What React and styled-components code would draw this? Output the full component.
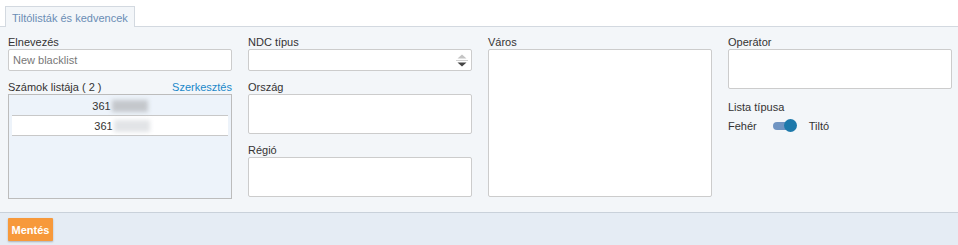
import React from "react";
import styled, { createGlobalStyle } from "styled-components";

const GlobalStyle = createGlobalStyle`
  html, body {
    margin: 0;
    padding: 0;
    background: #ffffff;
    font-family: "Liberation Sans", Arial, sans-serif;
    font-size: 11px;
    color: #333333;
  }
`;

const Page = styled.div`
  width: 958px;
  height: 245px;
  display: flex;
  flex-direction: column;
  padding-top: 6px;
  box-sizing: border-box;
  overflow: hidden;
`;

const TabBar = styled.div`
  display: flex;
  padding-left: 5px;
  border-bottom: 1px solid #d3d9e0;
  height: 20px;
`;

const Tab = styled.div`
  height: 21px;
  box-sizing: border-box;
  padding: 4px 6px 0 6px;
  border: 1px solid #d3d9e0;
  border-bottom: none;
  background: #f3f6f9;
  color: #6a8db5;
  font-size: 11px;
  line-height: 14px;
  margin-bottom: -1px;
`;

const Panel = styled.div`
  flex: 1;
  background: #f3f6f9;
  display: grid;
  grid-template-columns: repeat(4, 224px);
  column-gap: 16px;
  padding: 8px 0 0 8px;
  border-bottom: 1px solid #c9d1da;
`;

const Column = styled.div`
  display: flex;
  flex-direction: column;
`;

const Label = styled.div`
  line-height: 14px;
  font-size: 11px;
  color: #333;
  margin-top: ${(p) => p.$top || 0}px;
  display: flex;
  justify-content: space-between;
`;

const Link = styled.span`
  color: #1a88c9;
`;

const Input = styled.div`
  height: ${(p) => p.$h || 22}px;
  box-sizing: border-box;
  background: #fff;
  border: 1px solid #cccccc;
  border-radius: 2px;
  color: #777;
  padding: 4px 4px;
  line-height: 12px;
  position: relative;
`;

const Spinner = styled.svg`
  position: absolute;
  right: 3px;
  top: 4px;
`;

const ListBox = styled.div`
  height: 105px;
  box-sizing: border-box;
  background: #edf3fa;
  border: 1px solid #bcbcbc;
  padding: 1px 3px;
`;

const ListRow = styled.div`
  height: 20px;
  box-sizing: border-box;
  border-bottom: 1px solid #c8c8c8;
  background: ${(p) => (p.$white ? "#ffffff" : "transparent")};
  display: flex;
  justify-content: center;
  align-items: center;
  color: #333;
  padding-left: ${(p) => p.$shift || 0}px;
`;

const Blur = styled.span`
  display: inline-block;
  width: 36px;
  height: 12px;
  background: ${(p) => p.$c};
  filter: blur(2px);
  margin-left: 1px;
`;

const ToggleRow = styled.div`
  display: flex;
  align-items: center;
  height: 14px;
  margin-top: 5px;
`;

const Track = styled.div`
  width: 23px;
  height: 8px;
  border-radius: 4px;
  background: #6f94c2;
  position: relative;
  margin: 0 13px 0 16px;
`;

const Knob = styled.div`
  position: absolute;
  width: 13px;
  height: 13px;
  border-radius: 50%;
  background: #1d79ab;
  right: -1px;
  top: -3px;
`;

const Footer = styled.div`
  height: 32px;
  background: #e5ecf4;
  padding: 5px 8px;
  box-sizing: border-box;
`;

const Button = styled.button`
  height: 23px;
  width: 45px;
  border: none;
  border-radius: 1px;
  background: #f7993b;
  color: #fff;
  font-family: "Liberation Sans", Arial, sans-serif;
  font-weight: bold;
  font-size: 11px;
  padding: 0;
  box-shadow: 0 1px 2px rgba(0, 0, 0, 0.25);
`;

export default function App() {
  return (
    <Page>
      <GlobalStyle />
      <TabBar>
        <Tab>Tiltólisták és kedvencek</Tab>
      </TabBar>
      <Panel>
        <Column>
          <Label>Elnevezés</Label>
          <Input>New blacklist</Input>
          <Label $top={9}>
            <span>Számok listája ( 2 )</span>
            <Link>Szerkesztés</Link>
          </Label>
          <ListBox>
            <ListRow>
              361<Blur $c="#c4c7cc" />
            </ListRow>
            <ListRow $white $shift={4}>
              361<Blur $c="#e2e4e7" />
            </ListRow>
          </ListBox>
        </Column>
        <Column>
          <Label>NDC típus</Label>
          <Input>
            <Spinner width="12" height="13" viewBox="0 0 12 13">
              <path d="M1.5 4.5 L6 0.5 L10.5 4.5 Z" fill="#c4c4c4" />
              <line x1="0" y1="6.5" x2="12" y2="6.5" stroke="#d0d0d0" />
              <path d="M1.5 8.5 L6 12.5 L10.5 8.5 Z" fill="#444" />
            </Spinner>
          </Input>
          <Label $top={9}>Ország</Label>
          <Input $h={40} />
          <Label $top={9}>Régió</Label>
          <Input $h={40} />
        </Column>
        <Column>
          <Label>Város</Label>
          <Input $h={148} />
        </Column>
        <Column>
          <Label>Operátor</Label>
          <Input $h={40} />
          <Label $top={11}>Lista típusa</Label>
          <ToggleRow>
            <span>Fehér</span>
            <Track>
              <Knob />
            </Track>
            <span>Tiltó</span>
          </ToggleRow>
        </Column>
      </Panel>
      <Footer>
        <Button>Mentés</Button>
      </Footer>
    </Page>
  );
}
